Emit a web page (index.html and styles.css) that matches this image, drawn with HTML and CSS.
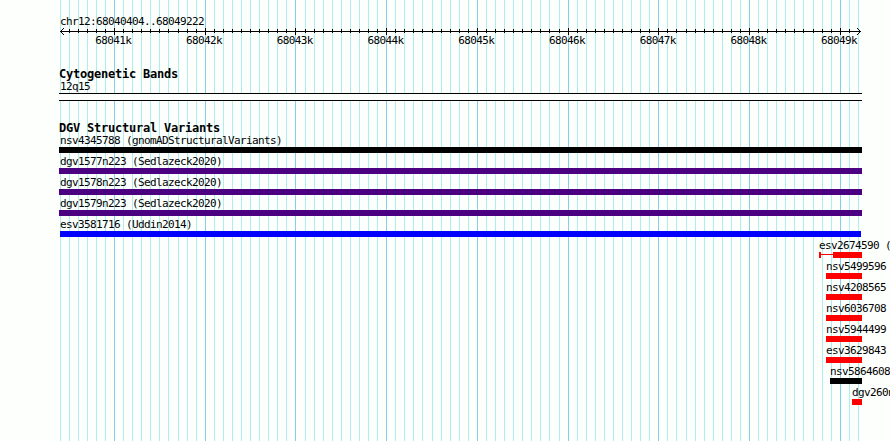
FILE: index.html
```html
<!DOCTYPE html>
<html lang="en">
<head>
<meta charset="utf-8">
<title>chr12:68040404..68049222</title>
<link rel="stylesheet" href="styles.css">
</head>
<body>
<div class="panel">
<svg class="grid" width="890" height="441" shape-rendering="crispEdges">
<path id="grid-minor" class="minor"/>
<path id="grid-major" class="major"/>
</svg>

<div class="tracks">
<div class="scale">
<div class="label">chr12:68040404..68049222</div>
<svg class="ruler" width="890" height="7" shape-rendering="crispEdges">
<path class="axis" d="M60 3.5H861"/>
<path id="ticks" class="axis"/>
<path class="head" d="M60 3h1v1h-1zM61 2h1v1h-1zM61 4h1v1h-1zM62 1h1v1h-1zM62 5h1v1h-1zM63 0h1v1h-1zM63 6h1v1h-1zM860 3h1v1h-1zM859 2h1v1h-1zM859 4h1v1h-1zM858 1h1v1h-1zM858 5h1v1h-1zM857 0h1v1h-1zM857 6h1v1h-1z"/>
</svg>
<div class="positions">
<span>68041k</span><span>68042k</span><span>68043k</span><span>68044k</span><span>68045k</span><span>68046k</span><span>68047k</span><span>68048k</span><span>68049k</span>
</div>
</div>

<div class="track cytoband">
<h2>Cytogenetic Bands</h2>
<div class="label">12q15</div>
<div class="band"></div>
</div>

<div class="track variants">
<h2>DGV Structural Variants</h2>
<div class="feature" style="margin-left:59px"><div class="name">nsv4345788 (gnomADStructuralVariants)</div><div class="bar black" style="width:803px"></div></div>
<div class="feature" style="margin-left:59px"><div class="name">dgv1577n223 (Sedlazeck2020)</div><div class="bar indigo" style="width:803px"></div></div>
<div class="feature" style="margin-left:59px"><div class="name">dgv1578n223 (Sedlazeck2020)</div><div class="bar indigo" style="width:803px"></div></div>
<div class="feature" style="margin-left:59px"><div class="name">dgv1579n223 (Sedlazeck2020)</div><div class="bar indigo" style="width:803px"></div></div>
<div class="feature" style="margin-left:60px"><div class="name flush">esv3581716 (Uddin2014)</div><div class="bar blue" style="width:801px"></div></div>
<div class="feature" style="margin-left:819px"><div class="name flush">esv2674590 (1000_Genomes)</div><div class="range"><div class="whisker" style="width:14px"></div><div class="bar red" style="width:29px"></div></div></div>
<div class="feature" style="margin-left:826px"><div class="name flush">nsv5499596</div><div class="bar red" style="width:36px"></div></div>
<div class="feature" style="margin-left:826px"><div class="name flush">nsv4208565</div><div class="bar red" style="width:36px"></div></div>
<div class="feature" style="margin-left:826px"><div class="name flush">nsv6036708</div><div class="bar red" style="width:36px"></div></div>
<div class="feature" style="margin-left:826px"><div class="name flush">nsv5944499</div><div class="bar red" style="width:36px"></div></div>
<div class="feature" style="margin-left:826px"><div class="name flush">esv3629843</div><div class="bar red" style="width:36px"></div></div>
<div class="feature" style="margin-left:830px"><div class="name flush">nsv5864608</div><div class="bar black" style="width:32px"></div></div>
<div class="feature" style="margin-left:852px"><div class="name flush">dgv260n223</div><div class="bar red" style="width:10px"></div></div>
</div>
</div>
</div>
<script src="grid.js"></script>
</body>
</html>
```
FILE: styles.css
```css
body {
margin: 0;
background: #fdfffc;
color: #000;
font: 11px/13px "DejaVu Sans Mono", monospace;
letter-spacing: -0.62px;
overflow: hidden;
}

.panel {
display: grid;
width: 890px;
height: 441px;
overflow: hidden;
}

/* The guide lines and the tracks share one cell */
.grid, .tracks {
grid-area: 1 / 1;
min-width: 0;
}

.grid path { fill: none; }
.grid .minor { stroke: #afeeee; }
.grid .major { stroke: #87ceeb; }

.label {
padding-left: 60px;
height: 13px;
white-space: pre;
}

/* Scale */
.scale {
padding-top: 15px;
height: 53px;
}

.ruler { display: block; }
.ruler .axis { stroke: #000; fill: none; }
.ruler .head { fill: #000; }

.positions {
display: grid;
grid-template-columns: repeat(9, 90.72px);
margin-top: -1px;
padding-left: 68px;
text-align: center;
}

/* Tracks */
h2 {
margin: 0;
padding-left: 59px;
height: 12px;
font-size: 12px;
line-height: 13px;
font-weight: bold;
letter-spacing: -0.22px;
}

.band {
margin-left: 59px;
width: 803px;
height: 8px;
box-sizing: border-box;
border: solid #000;
border-width: 1px 0;
background: #fdfffc;
}

.cytoband { height: 54px; }

.feature {
height: 21px;
}

.name {
height: 13px;
padding-left: 1px;
white-space: pre;
}

.flush { padding-left: 0; }

.bar { height: 6px; }
.black { background: #000; }
.indigo { background: #4b0082; }
.blue { background: #00f; }
.red { background: #f00; }

.range { display: flex; }

.whisker {
height: 6px;
box-sizing: border-box;
border-left: 2px solid #f00;
background: linear-gradient(#f00, #f00) 0 2px / 100% 1px no-repeat;
}
```
FILE: grid.js
```js
// One guide line every 100 bp, a major one every 1000 bp
var minor = '', major = '', ticks = '';
for (var i = -6; i <= 82; i++) {
  var x = Math.floor(114.5 + i * 9.072) + 0.5;
  if (i % 10 === 0) {
    major += 'M' + x + ' 0V441';
    ticks += 'M' + x + ' 0V7';
  } else {
    minor += 'M' + x + ' 0V441';
    if (i > -6 && i < 82) ticks += 'M' + x + ' 1V5';
  }
}
document.getElementById('grid-minor').setAttribute('d', minor);
document.getElementById('grid-major').setAttribute('d', major);
document.getElementById('ticks').setAttribute('d', ticks);
```
